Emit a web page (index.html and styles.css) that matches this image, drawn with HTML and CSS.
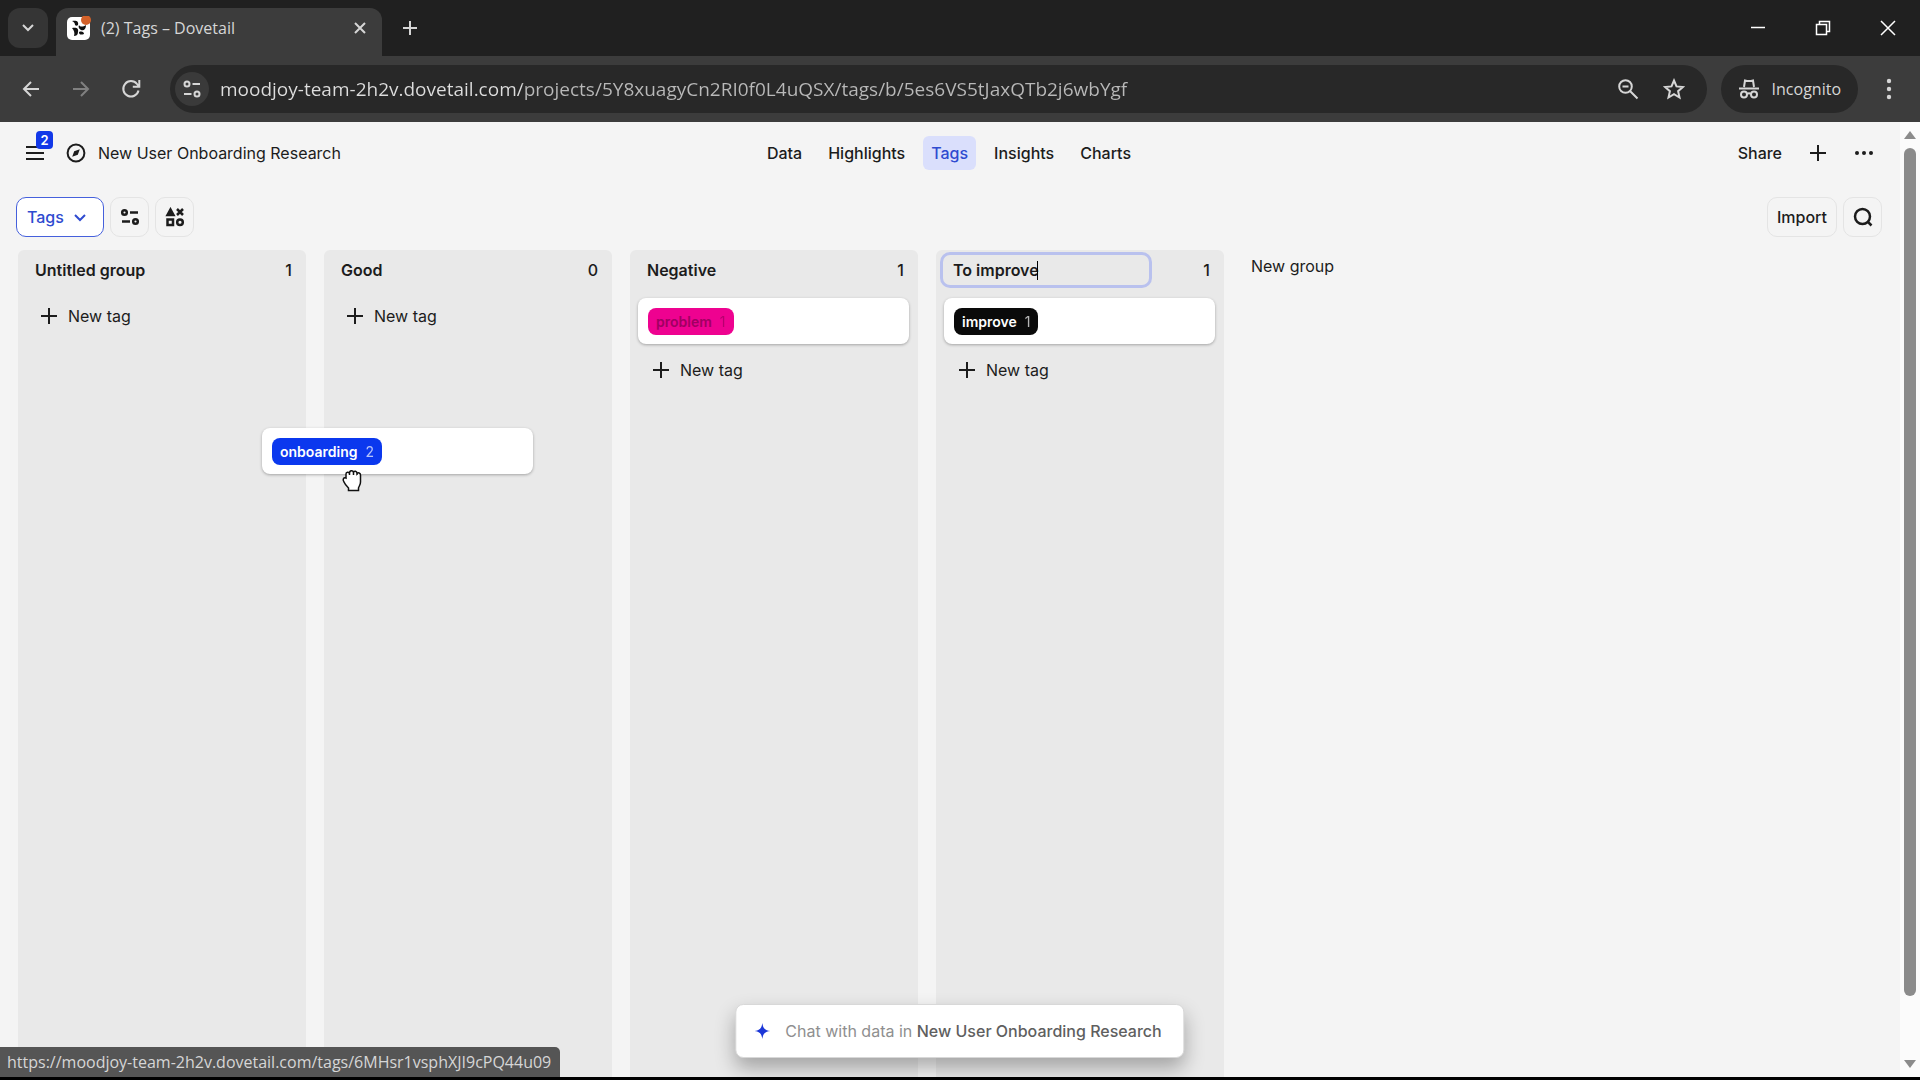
FILE: index.html
```html
<!DOCTYPE html>
<html lang="en">

<head>
	<meta charset="UTF-8">
	<meta name="viewport" content="width=device-width, initial-scale=1.0">
	<title>(2) Tags – Dovetail</title>
	<link rel="stylesheet" href="styles.css">
</head>

<body>
	<!-- Browser tabs -->
	<div class="tabstrip">
		<button class="tab-search" aria-label="Search tabs">
			<svg width="14" height="10" viewBox="0 0 14 10"><path d="M2 2l5 5 5-5" /></svg>
		</button>
		<div class="tab">
			<svg class="favicon" width="24" height="24" viewBox="0 0 24 24">
				<rect x="0" y="1" width="23" height="23" rx="5" fill="#fff" stroke="none" />
				<path d="M5 5c4-1 7 0 6 4-1 1-2 1-3 0C8 7 7 6 5 5zM5 12c4-1 7 0 6 4 0 3-2 4-4 4 1-3 0-6-2-8zM12 9c1 2 4 2 7 0 0 4-2 6-5 5-2-1-3-3-2-5zM12 16c3-1 5 0 5 2-3 1-5 1-5-2z" fill="#111" stroke="none" />
				<circle cx="19" cy="4" r="5" fill="#d4622a" stroke="none" />
			</svg>
			<span class="tab-title">(2) Tags – Dovetail</span>
			<button class="tab-close" aria-label="Close tab">
				<svg width="12" height="12" viewBox="0 0 12 12"><path d="M1 1l10 10M11 1L1 11" /></svg>
			</button>
		</div>
		<button class="tab-new" aria-label="New tab">
			<svg width="16" height="16" viewBox="0 0 16 16"><path d="M8 1v14M1 8h14" /></svg>
		</button>
		<div class="window-buttons">
			<button aria-label="Minimize"><svg width="16" height="16" viewBox="0 0 16 16"><path d="M1 7.500h14" /></svg></button>
			<button aria-label="Restore"><svg width="16" height="16" viewBox="0 0 16 16"><path d="M1.500 4.500h10v10h-10zM4.500 4V1.500h10v10H12" /></svg></button>
			<button aria-label="Close"><svg width="16" height="16" viewBox="0 0 16 16"><path d="M1 1l14 14M15 1L1 15" /></svg></button>
		</div>
	</div>

	<!-- Address bar -->
	<div class="toolbar">
		<button class="nav-btn" aria-label="Back">
			<svg width="18" height="18" viewBox="0 0 18 18"><path d="M17 9H2M9 2L2 9l7 7" /></svg>
		</button>
		<button class="nav-btn dim" aria-label="Forward">
			<svg width="18" height="18" viewBox="0 0 18 18"><path d="M1 9h15M9 2l7 7-7 7" /></svg>
		</button>
		<button class="nav-btn" aria-label="Reload">
			<svg width="20" height="20" viewBox="0 0 20 20"><path d="M17.500 11.500A7.700 7.700 0 1 1 16 5l2 2.500M18.300 1v6.700h-6.500" /></svg>
		</button>
		<div class="omnibox">
			<button class="site-info" aria-label="Site information">
				<svg width="20" height="20" viewBox="0 0 20 20"><circle cx="5" cy="5" r="2.500" /><path d="M10.500 5H18M2 15h7.500" /><circle cx="15" cy="15" r="2.500" /></svg>
			</button>
			<input class="url" type="text" aria-label="Address" spellcheck="false" value="moodjoy-team-2h2v.dovetail.com/projects/5Y8xuagyCn2RI0f0L4uQSX/tags/b/5es6VS5tJaxQTb2j6wbYgf">
			<button class="omni-btn" aria-label="Zoom">
				<svg width="22" height="22" viewBox="0 0 22 22"><circle cx="8.500" cy="8.500" r="6.300" /><path d="M13 13l7.500 7.500M5.500 8.500h6" /></svg>
			</button>
			<button class="omni-btn" aria-label="Bookmark">
				<svg width="22" height="22" viewBox="0 0 22 22"><path d="M11 2.500l2.500 5.900 6.400.6-4.800 4.200 1.400 6.300L11 16.200l-5.500 3.300 1.400-6.300L2.100 9l6.400-.6z" /></svg>
			</button>
		</div>
		<button class="incognito">
			<svg width="22" height="22" viewBox="0 0 22 22"><path d="M6 9l1-6.500 2 .5h4l2-.5L16 9M1 10.500h20" /><circle cx="6" cy="16.500" r="3" /><circle cx="16" cy="16.500" r="3" /><path d="M9 16q2-1.500 4 0" /></svg>
			Incognito
		</button>
		<button class="kebab" aria-label="Menu">
			<svg width="6" height="22" viewBox="0 0 6 22"><circle cx="3" cy="3" r="2.200" /><circle cx="3" cy="11" r="2.200" /><circle cx="3" cy="19" r="2.200" /></svg>
		</button>
	</div>

	<div class="viewport">
		<div class="app">
			<header class="header">
				<div class="project">
					<button class="menu-btn" aria-label="Menu, 2 notifications">
						<svg width="18" height="16" viewBox="0 0 18 16"><path d="M0 2h18M0 8h18M0 14h18" /></svg>
						<span class="menu-badge">2</span>
					</button>
					<svg class="compass" width="20" height="20" viewBox="0 0 20 20"><circle cx="10" cy="10" r="8.400" /><path d="M13.800 6.200l-2 5.600-5.600 2 2-5.600z" /></svg>
					<span>New User Onboarding Research</span>
				</div>
				<nav class="nav">
					<a href="#">Data</a>
					<a href="#">Highlights</a>
					<a href="#" class="active">Tags</a>
					<a href="#">Insights</a>
					<a href="#">Charts</a>
				</nav>
				<div class="header-actions">
					<button>Share</button>
					<button aria-label="Add"><svg width="18" height="18" viewBox="0 0 18 18"><path d="M9 1v16M1 9h16" /></svg></button>
					<button aria-label="More"><svg class="dots" width="20" height="18" viewBox="0 0 20 18"><circle cx="3" cy="9" r="2" /><circle cx="10" cy="9" r="2" /><circle cx="17" cy="9" r="2" /></svg></button>
				</div>
			</header>

			<div class="filters">
				<div class="view-select">
					<select aria-label="View">
						<option>Tags</option>
					</select>
					<svg width="14" height="10" viewBox="0 0 14 10"><path d="M2 2l5 5 5-5" /></svg>
				</div>
				<button class="tool" aria-label="Filter">
					<svg width="20" height="20" viewBox="0 0 20 20"><circle cx="4.500" cy="5.500" r="2.300" /><path d="M10 5.500h8M2 14.500h8" /><circle cx="15.500" cy="14.500" r="2.300" /></svg>
				</button>
				<button class="tool" aria-label="Fields">
					<svg width="20" height="20" viewBox="0 0 20 20"><path d="M5.500 2.500L8.500 8h-6z" fill="#1c1c1c" /><path d="M12 2l6 6M18 2l-6 6M2.500 12.500h5.500v5.500H2.500z" /><circle cx="15" cy="15.200" r="2.800" /></svg>
				</button>
				<button class="tool import">Import</button>
				<button class="tool" aria-label="Search">
					<svg width="20" height="20" viewBox="0 0 20 20"><circle cx="9.500" cy="9.500" r="7.500" /><path d="M14.500 14.500l4 4" /></svg>
				</button>
			</div>

			<main class="board">
				<section class="column">
					<div class="column-head"><h2>Untitled group</h2><span>1</span></div>
					<button class="new-tag"><svg width="16" height="16" viewBox="0 0 16 16"><path d="M8 0v16M0 8h16" /></svg>New tag</button>
				</section>
				<section class="column">
					<div class="column-head"><h2>Good</h2><span>0</span></div>
					<button class="new-tag"><svg width="16" height="16" viewBox="0 0 16 16"><path d="M8 0v16M0 8h16" /></svg>New tag</button>
				</section>
				<section class="column">
					<div class="column-head"><h2>Negative</h2><span>1</span></div>
					<div class="card"><span class="tag pink">problem <span class="num">1</span></span></div>
					<button class="new-tag"><svg width="16" height="16" viewBox="0 0 16 16"><path d="M8 0v16M0 8h16" /></svg>New tag</button>
				</section>
				<section class="column">
					<div class="column-head">
						<div class="title-edit">
							<input type="text" aria-label="Group title" value="To improve">
							<i class="caret"></i>
						</div>
						<span>1</span>
					</div>
					<div class="card"><span class="tag black">improve <span class="num">1</span></span></div>
					<button class="new-tag"><svg width="16" height="16" viewBox="0 0 16 16"><path d="M8 0v16M0 8h16" /></svg>New tag</button>
				</section>
				<button class="new-group">New group</button>
			</main>

			<!-- Card being dragged -->
			<div class="card dragging"><span class="tag blue">onboarding <span class="num">2</span></span></div>
			<svg class="cursor" width="24" height="26" viewBox="0 0 24 26"><path d="M4 14c-2-3 0-5 2-4V6c0-2 3-2.500 3.500-.5C9.500 2 13 2 13.500 4.500c.5-2 3.500-1.500 3.500 1C18 4 20.500 5 20.500 7v7c0 3-1.500 4-2 6v2.500h-10V20C7 18.500 5 16.500 4 14zM9.500 5.500V7M13.500 4.500V7M17 5.500V7" /></svg>
		</div>

		<div class="scrollbar">
			<svg width="12" height="8" viewBox="0 0 12 8"><path d="M6 0l6 8H0z" /></svg>
			<div class="track"><div class="thumb"></div></div>
			<svg width="12" height="8" viewBox="0 0 12 8"><path d="M6 8l6-8H0z" /></svg>
		</div>

		<button class="chat">
			<svg width="18" height="18" viewBox="0 0 18 18"><path d="M9 1c.8 5.500 2.500 7.200 8 8-5.500.8-7.200 2.500-8 8-.8-5.500-2.500-7.200-8-8 5.500-.8 7.200-2.500 8-8z" /></svg>
			<span>Chat with data in <b>New User Onboarding Research</b></span>
		</button>
		<div class="status">https://moodjoy-team-2h2v.dovetail.com/tags/6MHsr1vsphXJI9cPQ44u09</div>
	</div>
</body>

</html>
```
FILE: styles.css
```css
* {
	box-sizing: border-box;
}

body {
	margin: 0;
	height: 100vh;
	display: flex;
	flex-direction: column;
	background: #000;
	font-family: Inter, "Liberation Sans", sans-serif;
	font-size: 16px;
	font-weight: 500;
	color: #1c1c1c;
	overflow: hidden;
}

button,
input,
select {
	font: inherit;
	color: inherit;
	background: none;
	border: 0;
	padding: 0;
	margin: 0;
}

svg {
	display: block;
	flex: none;
	fill: none;
	stroke: currentColor;
	stroke-width: 2;
}

/* Browser window */
.tabstrip,
.toolbar,
.status {
	font-family: "Open Sans", "Noto Sans", sans-serif;
	font-weight: 400;
	color: #d6d6d6;
}

.tabstrip {
	display: flex;
	height: 56px;
	padding-left: 8px;
	background: #202020;
}

.tab-search {
	width: 40px;
	height: 40px;
	margin-top: 8px;
	border-radius: 12px;
	background: #353535;
	display: flex;
	align-items: center;
	justify-content: center;
}

.tab {
	display: flex;
	align-items: center;
	width: 326px;
	height: 48px;
	margin: 8px 0 0 8px;
	padding: 0 16px 8px 11px;
	border-radius: 12px 12px 0 0;
	background: #3c3c3c;
}

.tab-title {
	flex: 1;
	margin-left: 10px;
	font-size: 16px;
}

.tab-new {
	width: 56px;
	height: 56px;
	display: flex;
	align-items: center;
	justify-content: center;
}

.window-buttons {
	display: flex;
	margin-left: auto;
}

.window-buttons button {
	width: 65px;
	height: 56px;
	display: flex;
	align-items: center;
	justify-content: center;
	color: #fff;
}

.window-buttons svg {
	stroke-width: 1.5;
}

.toolbar {
	display: flex;
	align-items: center;
	height: 66px;
	padding: 0 8px 0 6px;
	background: #3c3c3c;
}

.nav-btn {
	width: 50px;
	height: 48px;
	display: flex;
	align-items: center;
	justify-content: center;
}

.dim {
	color: #808080;
}

.omnibox {
	flex: 1;
	display: flex;
	align-items: center;
	height: 48px;
	margin-left: 14px;
	padding: 0 10px 0 5px;
	border-radius: 24px;
	background: #282828;
}

.site-info {
	width: 34px;
	height: 34px;
	border-radius: 50%;
	background: #3a3a3a;
	display: flex;
	align-items: center;
	justify-content: center;
}

.url {
	flex: 1;
	margin-left: 11px;
	font-size: 19px;
	outline: 0;
	/* domain is brighter than the path */
	background: linear-gradient(to right, #dedede 302px, #b9b9b9 302px);
	-webkit-background-clip: text;
	background-clip: text;
	-webkit-text-fill-color: transparent;
}

.omni-btn {
	width: 46px;
	height: 46px;
	display: flex;
	align-items: center;
	justify-content: center;
}

.incognito {
	display: flex;
	align-items: center;
	gap: 12px;
	height: 48px;
	margin-left: 14px;
	padding: 0 17px;
	border-radius: 24px;
	background: #282828;
}

.kebab {
	width: 46px;
	margin-left: 8px;
	display: flex;
	justify-content: center;
}

.kebab svg,
.dots {
	fill: currentColor;
	stroke: none;
}

/* Page */
.viewport {
	position: relative;
	flex: 1;
	min-height: 0;
	display: flex;
	margin-bottom: 3px;
	background: #f4f4f4;
}

.app {
	position: relative;
	flex: 1;
	display: flex;
	flex-direction: column;
}

.header {
	display: grid;
	grid-template-columns: 1fr auto 1fr;
	align-items: center;
	height: 62px;
	padding: 0 26px 0 24px;
}

.project {
	display: flex;
	align-items: center;
	font-weight: 400;
}

.menu-btn {
	position: relative;
	margin: 0 24px 0 2px;
}

.menu-badge {
	position: absolute;
	left: 10px;
	top: -14px;
	width: 17px;
	height: 18px;
	border-radius: 4px;
	background: #1238e8;
	color: #fff;
	font-size: 13px;
	font-weight: 600;
	line-height: 18px;
	text-align: center;
}

.compass {
	margin: 0 12px 0 -2px;
}

.compass path {
	fill: currentColor;
	stroke: none;
}

.nav {
	display: flex;
	gap: 10px;
}

.nav a {
	padding: 0 8px;
	border-radius: 6px;
	line-height: 34px;
	color: inherit;
	text-decoration: none;
}

.nav .active {
	background: #dadffc;
	color: #2f4bd0;
}

.header-actions {
	display: flex;
	justify-content: flex-end;
	align-items: center;
	gap: 27px;
}

.filters {
	display: flex;
	align-items: center;
	gap: 6px;
	padding: 13px 18px 13px 16px;
}

.view-select {
	position: relative;
	color: #2f4bd0;
}

.view-select select {
	appearance: none;
	display: block;
	width: 88px;
	height: 40px;
	padding-left: 10px;
	border: 1px solid #4560dc;
	border-radius: 10px;
	background: #fff;
}

.view-select svg {
	position: absolute;
	right: 17px;
	top: 16px;
	pointer-events: none;
}

.tool {
	display: flex;
	align-items: center;
	justify-content: center;
	width: 39px;
	height: 40px;
	border: 1px solid #e4e4e4;
	border-radius: 10px;
}

.tool svg {
	stroke-width: 2.5;
}

.import {
	width: 70px;
	margin-left: auto;
}

.board {
	flex: 1;
	display: flex;
	gap: 18px;
	padding-left: 18px;
}

.column {
	width: 288px;
	padding: 0 9px 0 8px;
	border-radius: 6px 6px 0 0;
	background: #e9e9e9;
}

.column-head {
	display: flex;
	align-items: center;
	justify-content: space-between;
	height: 40px;
	margin-bottom: 8px;
	padding: 0 5px 0 9px;
}

.column-head h2 {
	margin: 0;
	font-size: 16px;
	font-weight: 600;
}

.title-edit {
	position: relative;
	margin-left: -10px;
}

.title-edit input {
	display: block;
	width: 206px;
	height: 30px;
	padding: 0 10px;
	border-radius: 7px;
	font-weight: 600;
	box-shadow: 0 0 0 3px #b9c1ee;
	outline: 0;
}

.caret {
	position: absolute;
	left: 94px;
	top: 6px;
	width: 1px;
	height: 19px;
	background: #000;
}

.card {
	display: flex;
	align-items: center;
	height: 46px;
	margin-bottom: 8px;
	padding: 0 10px;
	border-radius: 8px;
	background: #fff;
	box-shadow: 0 1px 3px rgba(0, 0, 0, 0.3);
}

.tag {
	display: flex;
	gap: 8px;
	padding: 0 8px;
	border-radius: 8px;
	font-size: 14px;
	font-weight: 600;
	line-height: 27px;
	color: #fff;
}

.num {
	font-weight: 400;
	opacity: 0.7;
}

.pink {
	background: #ee0290;
	color: #a00062;
}

.black {
	background: #0a0a0a;
}

.blue {
	background: #0b38ee;
}

.new-tag {
	display: flex;
	align-items: center;
	gap: 11px;
	height: 36px;
	padding: 0 15px;
	font-weight: 400;
}

.new-group {
	align-self: flex-start;
	height: 32px;
	margin-left: 9px;
	font-weight: 400;
}

.dragging {
	position: absolute;
	left: 262px;
	top: 306px;
	width: 271px;
}

.cursor {
	position: absolute;
	left: 340px;
	top: 346px;
	fill: #fff;
	stroke: #111;
	stroke-width: 1.5;
}

.scrollbar {
	display: flex;
	flex-direction: column;
	align-items: center;
	width: 20px;
	padding: 9px 0;
	background: #fbfbfb;
}

.scrollbar svg {
	fill: #8b8b8b;
	stroke: none;
}

.track {
	flex: 1;
	width: 12px;
	padding: 9px 0 64px;
}

.thumb {
	height: 100%;
	border-radius: 6px;
	background: #8b8b8b;
}

.chat {
	position: absolute;
	left: 50%;
	bottom: 19px;
	transform: translateX(-50%);
	display: flex;
	align-items: center;
	gap: 14px;
	height: 54px;
	padding: 0 22px 0 17px;
	border: 1px solid #d8d8d8;
	border-radius: 8px;
	background: #fff;
	box-shadow: 0 10px 20px rgba(0, 0, 0, 0.3);
	font-weight: 400;
	color: #8f8f8f;
	white-space: nowrap;
}

.chat svg {
	fill: #1c37d8;
	stroke: none;
}

.chat b {
	font-weight: 500;
	color: #5f5f5f;
}

.status {
	position: absolute;
	left: 0;
	bottom: 0;
	padding: 0 9px 0 7px;
	border-radius: 0 5px 0 0;
	background: #555;
	font-size: 16px;
	line-height: 30px;
}
```
